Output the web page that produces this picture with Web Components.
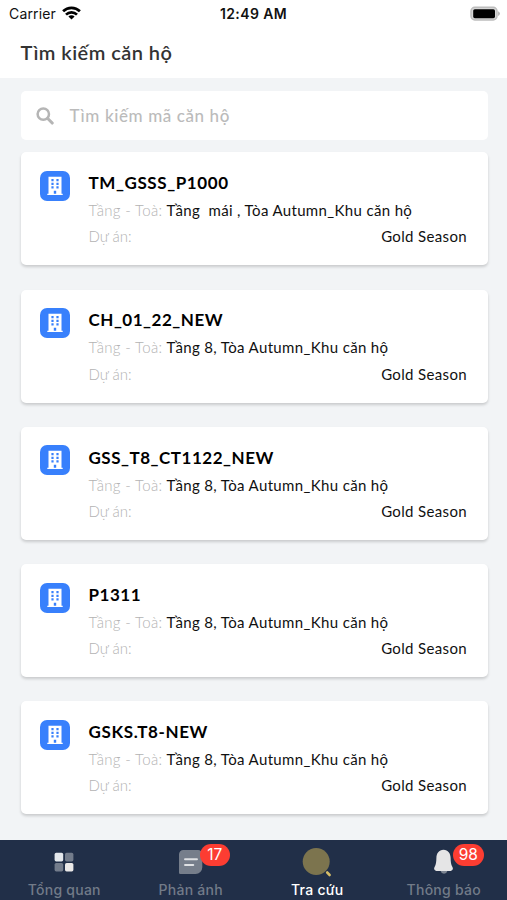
<!DOCTYPE html>

<html lang="vi">
  <head>
    <title>Tìm kiếm căn hộ</title>

    <meta charset="utf-8">
    <meta name="viewport" content="width=device-width, initial-scale=1">

    <style>
      body {
        margin: 0;
        height: 900px;
        overflow: hidden;
        font-family: Lato, "Open Sans", sans-serif;
      }
    </style>
  </head>

  <body>
    <app-screen>
      <status-bar slot="top" carrier="Carrier" time="12:49 AM"></status-bar>
      <page-header slot="top">Tìm kiếm căn hộ</page-header>

      <search-box>Tìm kiếm mã căn hộ</search-box>
      <apartment-card floor="Tầng  mái , Tòa Autumn_Khu căn hộ" project="Gold Season" style="--name-spacing: .6px">TM_GSSS_P1000</apartment-card>
      <apartment-card floor="Tầng 8, Tòa Autumn_Khu căn hộ" project="Gold Season">CH_01_22_NEW</apartment-card>
      <apartment-card floor="Tầng 8, Tòa Autumn_Khu căn hộ" project="Gold Season">GSS_T8_CT1122_NEW</apartment-card>
      <apartment-card floor="Tầng 8, Tòa Autumn_Khu căn hộ" project="Gold Season">P1311</apartment-card>
      <apartment-card floor="Tầng 8, Tòa Autumn_Khu căn hộ" project="Gold Season" style="--name-spacing: .62px">GSKS.T8-NEW</apartment-card>

      <tab-bar slot="bottom">
        <tab-item label="Tổng quan">
          <svg width="20" height="20" viewBox="0 0 20 20">
            <rect x=".6" y=".8" width="8.6" height="8.6" rx="1.6" fill="#e4e8ec"/>
            <rect x="11" y=".8" width="8.4" height="8.6" rx="1.6" fill="#737c8b"/>
            <rect x=".6" y="11" width="8.6" height="8.4" rx="1.6" fill="#737c8b"/>
            <rect x="11" y="11" width="8.4" height="8.4" rx="1.6" fill="#ebe9e8"/>
          </svg>
        </tab-item>
        <tab-item label="Phản ánh" badge="17">
          <svg width="26" height="26" viewBox="0 0 26 26">
            <path d="M5.300 1H20a4.300 4.300 0 0 1 4.300 4.300v13A6.700 6.700 0 0 1 17.600 25H2.300a1.300 1.300 0 0 1-1.300-1.300V5.300A4.300 4.300 0 0 1 5.300 1z" fill="#767e8b"/>
            <path d="M7 10.200h12M7 16h8.300" stroke="#dfe1e4" stroke-width="1.900" stroke-linecap="round"/>
          </svg>
        </tab-item>
        <tab-item label="Tra cứu" active>
          <svg width="30" height="30" viewBox="0 0 30 30">
            <circle cx="14.200" cy="14.500" r="13.500" fill="#7c744e"/>
            <path d="M25.300 25.600l2.200 2.300" stroke="#d6bd68" stroke-width="2.800" stroke-linecap="round"/>
          </svg>
        </tab-item>
        <tab-item label="Thông báo" badge="98">
          <svg width="20" height="26" viewBox="0 0 20 26">
            <path d="M6.600 22h6.800a3.500 3.500 0 0 1-6.800 0z" fill="#7d8592"/>
            <path d="M9.500 .8c4.600.1 7 3.600 7.100 8 .1 4.400.4 6.700 1.700 9 1.200 1.900.5 3.800-1.600 4.100H2.300C.2 21.600-.5 19.700.7 17.800c1.300-2.300 1.600-4.600 1.700-9 .1-4.400 2.500-7.900 7.100-8z" fill="#e5e5e6"/>
          </svg>
        </tab-item>
      </tab-bar>
    </app-screen>

    <template id="app-screen">
      <style>
        :host {
          display: flex;
          flex-direction: column;
          height: 100%;
          background: #f2f4f6;
        }

        main {
          flex: 1;
          min-height: 0;
          display: flex;
          flex-direction: column;
          gap: 24.25px;
          padding: 13px 19.5px 0 20.5px;
        }
      </style>
      <slot name="top"></slot>
      <main><slot></slot></main>
      <slot name="bottom"></slot>
    </template>

    <template id="status-bar">
      <style>
        :host {
          display: grid;
          grid-template-columns: 1fr auto 1fr;
          align-items: center;
          height: 27px;
          padding: 0 7px 0 9px;
          background: #fff;
          color: #111;
          font: 14px/27px Inter, sans-serif;
        }

        .left {
          display: flex;
          align-items: center;
          gap: 6px;
          letter-spacing: .15px;
        }

        .time {
          padding-right: 2px;
          font-weight: 600;
          letter-spacing: .4px;
        }

        .left svg {
          margin-top: -2px;
        }

        .battery {
          justify-self: end;
          margin-top: -1px;
        }
      </style>
      <div class="left">
        <span class="carrier"></span>
        <svg width="19" height="14" viewBox="0 0 19 14" fill="none" stroke="#000" stroke-width="2.700">
          <path d="M1.100 5.300a12 12 0 0 1 16.800 0"/>
          <path d="M4 8.600a7.900 7.900 0 0 1 11 0"/>
          <path d="M9.500 13.600L6.400 10.500a4.400 4.400 0 0 1 6.200 0z" fill="#000" stroke="none"/>
        </svg>
      </div>
      <span class="time"></span>
      <svg class="battery" width="31" height="15" viewBox="0 0 31 15">
        <rect x="2" y="1.300" width="26" height="12.600" rx="3.800" fill="#d6d6d6" stroke="#bdbdbd" stroke-width="1.500"/>
        <rect x="4.200" y="3.200" width="21.800" height="9" rx="1.600" fill="#000"/>
        <path d="M29.200 5.200a2.600 2.600 0 0 1 0 4.800z" fill="#aaa"/>
      </svg>
    </template>

    <template id="page-header">
      <style>
        :host {
          display: block;
          height: 51px;
          padding-left: 20.5px;
          background: #fff;
          color: #333;
          font-size: 20px;
          font-weight: 600;
          line-height: 51px;
          letter-spacing: .45px;
        }
      </style>
      <slot></slot>
    </template>

    <template id="search-box">
      <style>
        :host {
          display: flex;
          align-items: center;
          gap: 16px;
          height: 49px;
          margin-bottom: -12px;
          padding-left: 15px;
          box-sizing: border-box;
          flex-shrink: 0;
          border-radius: 5px;
          background: #fff;
          color: #bbb;
          font-size: 17px;
          font-weight: 500;
          letter-spacing: .6px;
        }
      </style>
      <svg width="18" height="18" viewBox="0 0 18 18" fill="none" stroke="#b5b5b5">
        <circle cx="7.300" cy="7.100" r="5.700" stroke-width="2.500"/>
        <path d="M11.700 11.500l4.500 4.500" stroke-width="3.100" stroke-linecap="round"/>
      </svg>
      <slot></slot>
    </template>

    <template id="apartment-card">
      <style>
        :host {
          display: flex;
          gap: 19px;
          height: 113px;
          padding: 18.500px 20.500px 0 19px;
          box-sizing: border-box;
          flex-shrink: 0;
          border-radius: 5px;
          background: #fff;
          box-shadow: 0 2px 3px rgba(0, 0, 0, .17);
          color: #111;
          font-size: 15px;
        }

        svg {
          flex: none;
        }

        .info {
          flex: 1;
          margin-top: -.6px;
        }

        .name {
          height: 26px;
          color: #000;
          font-size: 17px;
          font-weight: 700;
          line-height: 25px;
          letter-spacing: var(--name-spacing, .52px);
        }

        .row {
          display: flex;
          gap: 4px;
          height: 26.200px;
          line-height: 28px;
          white-space: pre;
        }

        .label {
          color: #b3b3b3;
          font-weight: 300;
        }

        .floor-label {
          letter-spacing: .34px;
        }

        .floor {
          letter-spacing: .35px;
        }

        .project {
          margin-left: auto;
          letter-spacing: .35px;
        }
      </style>
      <svg width="30" height="30" viewBox="0 0 30 30">
        <rect width="30" height="30" rx="7" fill="#3880fc"/>
        <path d="M8.500 5.800h13v16.900h1.200v1.400H7.300v-1.400h1.200z" fill="#fff"/>
        <path d="M11.400 8.100h2.200v2.200h-2.200zM16.400 8.100h2.200v2.200h-2.200zM11.400 11.700h2.200v2.200h-2.200zM16.400 11.700h2.200v2.200h-2.200zM11.400 15.300h2.200v2.200h-2.200zM16.400 15.300h2.200v2.200h-2.200zM13.800 19.800h2.400v2.900h-2.400z" fill="#3880fc"/>
      </svg>
      <div class="info">
        <div class="name"><slot></slot></div>
        <div class="row"><span class="label floor-label">Tầng - Toà:</span><span class="floor"></span></div>
        <div class="row"><span class="label">Dự án:</span><span class="project"></span></div>
      </div>
    </template>

    <template id="tab-bar">
      <style>
        :host {
          display: grid;
          grid-template-columns: repeat(4, 126.5px);
          height: 60px;
          flex-shrink: 0;
          background: #212f48;
        }
      </style>
      <slot></slot>
    </template>

    <template id="tab-item">
      <style>
        :host {
          display: flex;
          flex-direction: column;
          align-items: center;
          padding-left: 2px;
          color: #727b88;
          font: 500 14px/18px Inter, sans-serif;
          letter-spacing: .25px;
        }

        :host([active]) {
          color: #fff;
        }

        .icon {
          position: relative;
          display: grid;
          place-items: center;
          width: 30px;
          height: 41px;
          padding-top: 2px;
          box-sizing: border-box;
        }

        /* sits over the top right corner of the icon */
        .badge {
          position: absolute;
          left: 24px;
          top: 4px;
          min-width: 30px;
          height: 22px;
          padding: 0 6px;
          box-sizing: border-box;
          border-radius: 11px;
          background: #fc3d32;
          color: #fff;
          font-size: 15.5px;
          font-weight: 400;
          line-height: 22px;
          letter-spacing: 0;
          text-align: center;
        }

        .badge:empty {
          display: none;
        }
      </style>
      <div class="icon"><slot></slot><span class="badge"></span></div>
      <span class="label"></span>
    </template>

    <script>
      // Clones the template named after the tag into an open shadow root
      class TemplateElement extends HTMLElement {
        constructor() {
          super();
          const template = document.getElementById(this.localName);
          this.attachShadow({ mode: 'open' }).appendChild(template.content.cloneNode(true));
        }

        fill(...names) {
          names.forEach(name => {
            this.shadowRoot.querySelector(`.${name}`).textContent = this.getAttribute(name) || '';
          });
        }
      }

      class AppScreen extends TemplateElement {}
      class PageHeader extends TemplateElement {}
      class SearchBox extends TemplateElement {}
      class TabBar extends TemplateElement {}

      class StatusBar extends TemplateElement {
        connectedCallback() {
          this.fill('carrier', 'time');
        }
      }

      class ApartmentCard extends TemplateElement {
        connectedCallback() {
          this.fill('floor', 'project');
        }
      }

      class TabItem extends TemplateElement {
        connectedCallback() {
          this.fill('label', 'badge');
        }
      }

      customElements.define('app-screen', AppScreen);
      customElements.define('status-bar', StatusBar);
      customElements.define('page-header', PageHeader);
      customElements.define('search-box', SearchBox);
      customElements.define('apartment-card', ApartmentCard);
      customElements.define('tab-bar', TabBar);
      customElements.define('tab-item', TabItem);
    </script>
  </body>
</html>
